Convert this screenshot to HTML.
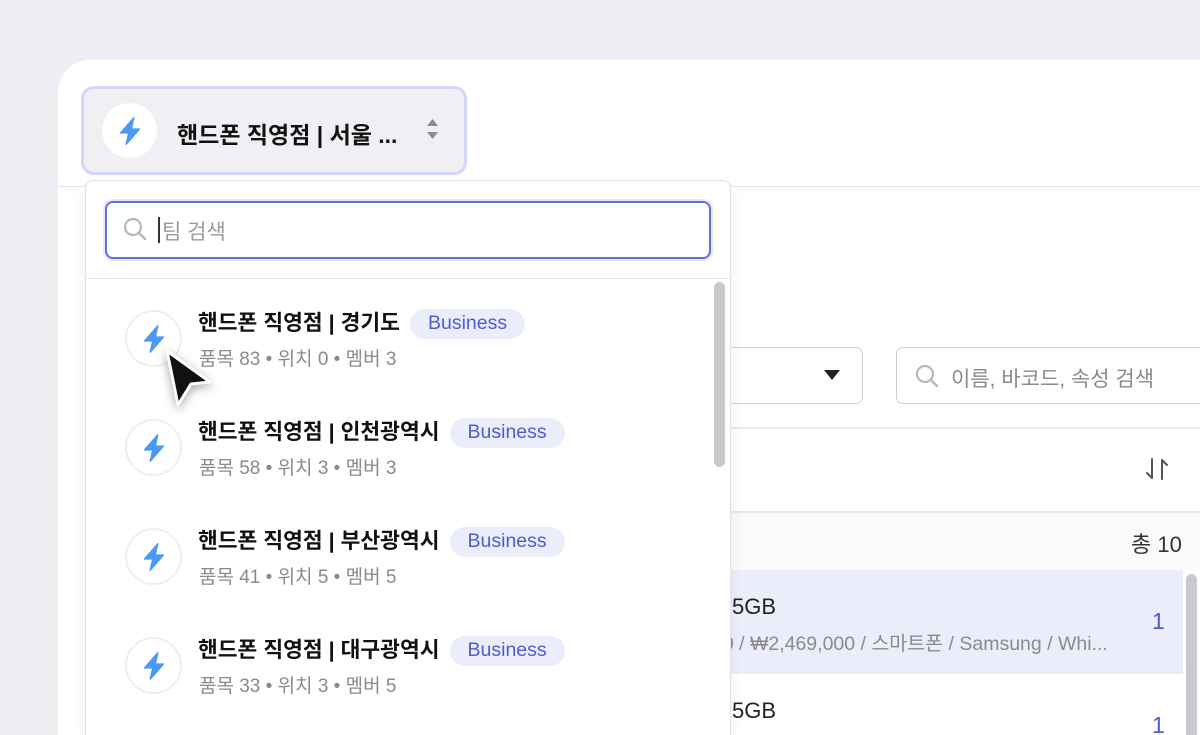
<!DOCTYPE html>
<html style="overflow:hidden;width:1200px;height:735px"><head><meta charset="utf-8"><style>
*{box-sizing:border-box;margin:0;padding:0}
body{width:1200px;height:735px;overflow:hidden;background:#eeeff2;font-family:"Liberation Sans","Noto Sans CJK KR",sans-serif;position:relative}
.card{position:absolute;left:58px;top:60px;width:1142px;height:675px;background:#fff;border-radius:32px 0 0 0}
.abs{position:absolute}
.sel{left:81px;top:86px;width:386px;height:89px;background:#efeff4;border:3px solid #d3d6fb;border-radius:13px}
.ic{border-radius:50%;background:#fff;display:flex;align-items:center;justify-content:center}
.t{font-weight:bold;color:#111;font-size:21.5px;white-space:nowrap}
.panel{left:85px;top:180px;width:646px;height:555px;background:#fff;border:1px solid #e2e2e6;border-bottom:none;border-radius:8px 8px 0 0;box-shadow:0 4px 14px rgba(0,0,0,.06)}
.badge{display:inline-block;background:#ebedfb;color:#4d5dd0;font-size:19.5px;border-radius:16px;padding:3px 18px 4px;font-weight:normal;margin-left:10px;vertical-align:1px}
.sub{color:#8a8a8e;font-size:19px;white-space:nowrap}
</style></head><body>
<div class="card"></div>
<div class="abs" style="left:58px;top:186px;width:1142px;height:1px;background:#e4e4e8"></div>
<div class="abs sel"></div>
<div class="abs ic" style="left:102px;top:103px;width:55px;height:55px">
<svg width="30" height="30" viewBox="0 0 24 24"><path d="M15 1.5 L4.5 13.5 H11 L9 22.5 L19.5 10.5 H13 Z" fill="#4a9af5" stroke="#4a9af5" stroke-width="1.2" stroke-linejoin="round"/></svg></div>
<div class="abs t" style="left:177px;top:116px;font-size:23px">핸드폰 직영점 | 서울 ...</div>
<svg class="abs" style="left:426px;top:118px" width="13" height="22" viewBox="0 0 13 22"><path d="M6.5 1 L12 8 H1Z M6.5 21 L12 14 H1Z" fill="#8a8a90"/></svg>

<!-- right content -->
<div class="abs" style="left:700px;top:347px;width:163px;height:57px;border:1px solid #cfcfd4;border-radius:7px;background:#fff"></div>
<svg class="abs" style="left:823px;top:369px" width="18" height="12"><path d="M1 1H17L9 11Z" fill="#222"/></svg>
<div class="abs" style="left:896px;top:347px;width:320px;height:57px;border:1px solid #cfcfd4;border-radius:7px;background:#fff"></div>
<svg class="abs" style="left:914px;top:363px" width="26" height="26" viewBox="0 0 26 26"><circle cx="11" cy="11" r="8" fill="none" stroke="#b8b8bc" stroke-width="2.2"/><path d="M17 17L23 23" stroke="#b8b8bc" stroke-width="2.4" stroke-linecap="round"/></svg>
<div class="abs" style="left:951px;top:363px;font-size:21px;color:#8a8a8e;white-space:nowrap">이름, 바코드, 속성 검색</div>
<div class="abs" style="left:700px;top:427px;width:500px;height:2px;background:#e8e8ec"></div>
<svg class="abs" style="left:1143px;top:456px" width="28" height="26" viewBox="0 0 28 26"><path d="M9 3V22M4 17L9 22M19 23V4M19 4L24 9" fill="none" stroke="#555" stroke-width="2" stroke-linecap="round"/></svg>
<div class="abs" style="left:700px;top:511px;width:500px;height:2px;background:#e8e8ec"></div>
<div class="abs" style="left:700px;top:513px;width:500px;height:57px;background:#fafafb"></div>
<div class="abs" style="left:1131px;top:527px;font-size:22px;color:#333">총 10</div>
<div class="abs" style="left:700px;top:570px;width:483px;height:104px;background:#ecedfb"></div>
<div class="abs" style="left:1186px;top:574px;width:11px;height:170px;background:#c9c9ce;border-radius:6px"></div>
<div class="abs" style="left:732px;top:594px;font-size:22px;color:#222">5GB</div>
<div class="abs" style="left:712px;top:627px;font-size:19.5px;color:#8a8a8e;white-space:nowrap">00 / ₩2,469,000 / 스마트폰 / Samsung / Whi...</div>
<div class="abs" style="left:1152px;top:608px;font-size:23px;color:#4d5dd0">1</div>
<div class="abs" style="left:732px;top:698px;font-size:22px;color:#222">5GB</div>
<div class="abs" style="left:1152px;top:712px;font-size:23px;color:#4d5dd0">1</div>
<div class="abs" style="left:700px;top:180px;width:31px;height:555px;background:#fff"></div>

<!-- dropdown -->
<div class="abs panel"></div>
<div class="abs" style="left:105px;top:201px;width:606px;height:58px;border:2px solid #6570d8;border-radius:8px;background:#fff;box-shadow:0 0 0 2px #e4e6fb"></div>
<svg class="abs" style="left:122px;top:216px" width="26" height="26" viewBox="0 0 26 26"><circle cx="11" cy="11" r="8" fill="none" stroke="#b8b8bc" stroke-width="2.2"/><path d="M17 17L23 23" stroke="#b8b8bc" stroke-width="2.4" stroke-linecap="round"/></svg>
<div class="abs" style="left:158px;top:217px;width:2px;height:26px;background:#333"></div>
<div class="abs" style="left:162px;top:216px;font-size:21px;color:#9a9a9e">팀 검색</div>
<div class="abs" style="left:86px;top:278px;width:644px;height:1px;background:#e6e6ea"></div>
<div class="abs" style="left:714px;top:282px;width:11px;height:185px;background:#c8c8cd;border-radius:6px"></div>

<div class="abs ic" style="left:125px;top:310px;width:57px;height:57px;border:2px solid #efefef"><svg width="30" height="30" viewBox="0 0 24 24"><path d="M15 1.5 L4.5 13.5 H11 L9 22.5 L19.5 10.5 H13 Z" fill="#4a9af5" stroke="#4a9af5" stroke-width="1.2" stroke-linejoin="round"/></svg></div>
<div class="abs t" style="left:198px;top:306px">핸드폰 직영점 | 경기도<span class="badge">Business</span></div>
<div class="abs sub" style="left:199px;top:344px">품목 83 • 위치 0 • 멤버 3</div>

<div class="abs ic" style="left:125px;top:419px;width:57px;height:57px;border:2px solid #efefef"><svg width="30" height="30" viewBox="0 0 24 24"><path d="M15 1.5 L4.5 13.5 H11 L9 22.5 L19.5 10.5 H13 Z" fill="#4a9af5" stroke="#4a9af5" stroke-width="1.2" stroke-linejoin="round"/></svg></div>
<div class="abs t" style="left:198px;top:415px">핸드폰 직영점 | 인천광역시<span class="badge">Business</span></div>
<div class="abs sub" style="left:199px;top:453px">품목 58 • 위치 3 • 멤버 3</div>

<div class="abs ic" style="left:125px;top:528px;width:57px;height:57px;border:2px solid #efefef"><svg width="30" height="30" viewBox="0 0 24 24"><path d="M15 1.5 L4.5 13.5 H11 L9 22.5 L19.5 10.5 H13 Z" fill="#4a9af5" stroke="#4a9af5" stroke-width="1.2" stroke-linejoin="round"/></svg></div>
<div class="abs t" style="left:198px;top:524px">핸드폰 직영점 | 부산광역시<span class="badge">Business</span></div>
<div class="abs sub" style="left:199px;top:562px">품목 41 • 위치 5 • 멤버 5</div>

<div class="abs ic" style="left:125px;top:637px;width:57px;height:57px;border:2px solid #efefef"><svg width="30" height="30" viewBox="0 0 24 24"><path d="M15 1.5 L4.5 13.5 H11 L9 22.5 L19.5 10.5 H13 Z" fill="#4a9af5" stroke="#4a9af5" stroke-width="1.2" stroke-linejoin="round"/></svg></div>
<div class="abs t" style="left:198px;top:633px">핸드폰 직영점 | 대구광역시<span class="badge">Business</span></div>
<div class="abs sub" style="left:199px;top:671px">품목 33 • 위치 3 • 멤버 5</div>

<!-- cursor -->
<svg class="abs" style="left:160px;top:346px;filter:drop-shadow(0 3px 5px rgba(0,0,0,.35))" width="60" height="66" viewBox="0 0 60 66"><path d="M7 5 L50 36 L31 38 L18 59 Z" fill="#111" stroke="#fff" stroke-width="3" stroke-linejoin="round"/></svg>
</body></html>
